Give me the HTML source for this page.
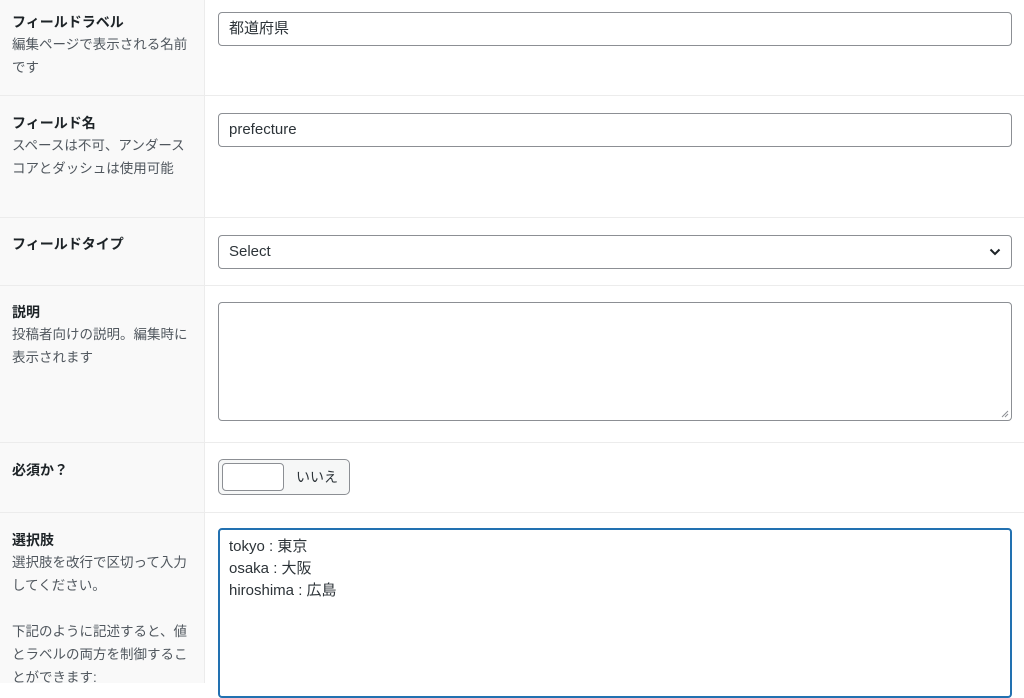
<!DOCTYPE html>
<html><head><meta charset="utf-8"><style>
body{margin:0;width:1024px;height:683px;overflow:hidden;background:#fff;font-family:"Liberation Sans","Noto Sans CJK JP",sans-serif;color:#1d2327;position:relative}
.left{position:absolute;left:0;top:0;width:204px;height:683px;background:#f9f9f9;border-right:1px solid #ececec}
.hr{position:absolute;left:0;width:1024px;height:1px;background:#ececec}
.lab{position:absolute;left:12px;width:180px;font-size:14px;line-height:22px}
.lab b{display:block;font-weight:bold;color:#1d2327}
.lab span{color:#50575e;font-size:13.5px}
.box{position:absolute;left:218px;width:794px;border:1px solid #8c8f94;border-radius:4px;background:#fff;box-sizing:border-box;font-size:15px;color:#2c3338;padding-left:10px}
</style></head><body>
<div class="left"></div>
<div class="hr" style="top:95px"></div>
<div class="hr" style="top:217px"></div>
<div class="hr" style="top:285px"></div>
<div class="hr" style="top:442px"></div>
<div class="hr" style="top:512px"></div>

<div class="lab" style="top:11px"><b>フィールドラベル</b><span>編集ページで表示される名前です</span></div>
<div class="lab" style="top:112px"><b>フィールド名</b><span>スペースは不可、アンダースコアとダッシュは使用可能</span></div>
<div class="lab" style="top:233px"><b>フィールドタイプ</b></div>
<div class="lab" style="top:301px"><b>説明</b><span>投稿者向けの説明。編集時に表示されます</span></div>
<div class="lab" style="top:459px"><b>必須か？</b></div>
<div class="lab" style="top:529px"><b>選択肢</b><span>選択肢を改行で区切って入力してください。<br><br>下記のように記述すると、値とラベルの両方を制御することができます:</span></div>

<div class="box" style="top:12px;height:34px;line-height:32px">都道府県</div>
<div class="box" style="top:113px;height:34px;line-height:32px">prefecture</div>
<div class="box" style="top:235px;height:34px;line-height:32px">Select
<svg style="position:absolute;right:10px;top:12px" width="12" height="8" viewBox="0 0 12 8"><path d="M1.5 1.5L6 6L10.5 1.5" fill="none" stroke="#1d2327" stroke-width="2"/></svg></div>
<div class="box" style="top:302px;height:119px">
<svg style="position:absolute;right:2px;bottom:2px" width="8" height="8" viewBox="0 0 8 8"><path d="M1 7L7 1M4 7L7 4" stroke="#8c8f94" stroke-width="1"/></svg></div>

<div style="position:absolute;left:218px;top:459px;width:132px;height:36px;border:1px solid #8c8f94;border-radius:5px;background:#f6f7f7;box-sizing:border-box">
<div style="position:absolute;left:3px;top:3px;width:62px;height:28px;background:#fff;border:1px solid #8c8f94;border-radius:4px;box-sizing:border-box"></div>
<div style="position:absolute;left:77px;top:7px;font-size:14px;color:#2c3338">いいえ</div></div>

<div class="box" style="top:528px;height:170px;border:2px solid #2271b1;padding-left:9px;padding-top:6px;line-height:22px;font-size:15px">tokyo : 東京<br>osaka : 大阪<br>hiroshima : 広島</div>
</body></html>
